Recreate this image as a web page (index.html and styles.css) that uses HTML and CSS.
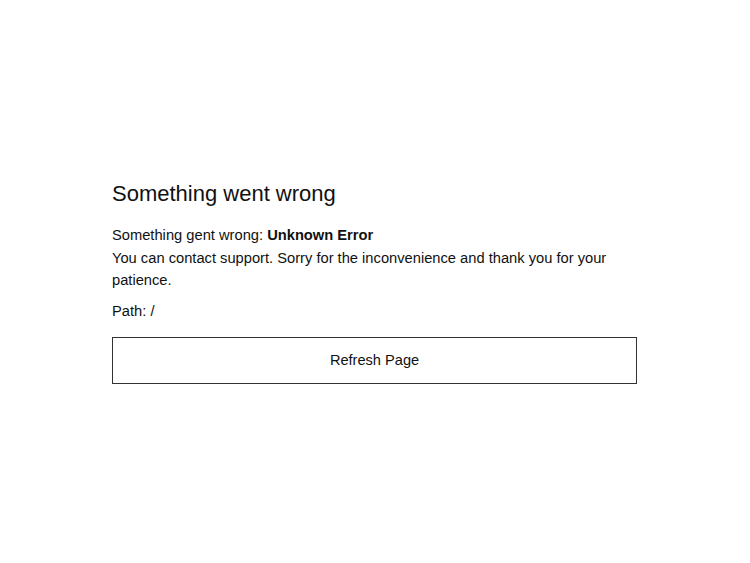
FILE: index.html
```html
<!DOCTYPE html>
<html lang="en">
<head>
  <meta charset="UTF-8">
  <meta name="viewport" content="width=device-width, initial-scale=1.0">
  <title>Something went wrong</title>
  <link rel="stylesheet" href="styles.css">
</head>
<body>
  <!-- Error Box -->
  <div class="error-box">
    <h1 class="error-title">Something went wrong</h1>
    <p class="error-message">
      Something gent wrong: <strong>Unknown Error</strong><br>
      You can contact support. Sorry for the inconvenience and thank you for your patience.
    </p>
    <p class="error-path">Path: /</p>
    <button class="refresh-button" onclick="location.reload()">Refresh Page</button>
  </div>
</body>
</html>
```

FILE: styles.css
```css
/* General Styles */
body {
  margin: 0;
  padding: 0;
  font-family: 'Liberation Sans', Arial, sans-serif;
  background-color: #ffffff;
  color: #111111;
  display: flex;
  justify-content: center;
  align-items: center;
  height: 100vh;
}

/* Error Box */
.error-box {
  width: 525px;
  margin-left: -1px;
  padding-top: 2px;
}

.error-title {
  font-size: 22px;
  font-weight: 400;
  margin: 0 0 17px;
}

.error-message,
.error-path {
  font-size: 14.7px;
  line-height: 22.5px;
  margin: 0 0 8px;
}

.error-path {
  margin-bottom: 0;
}

/* Refresh Button */
.refresh-button {
  display: block;
  width: 100%;
  margin-top: 15px;
  padding: 14px 0 15px;
  font-family: inherit;
  font-size: 14.6px;
  color: #111111;
  background-color: #ffffff;
  border: 1px solid #333333;
  cursor: pointer;
}
```
